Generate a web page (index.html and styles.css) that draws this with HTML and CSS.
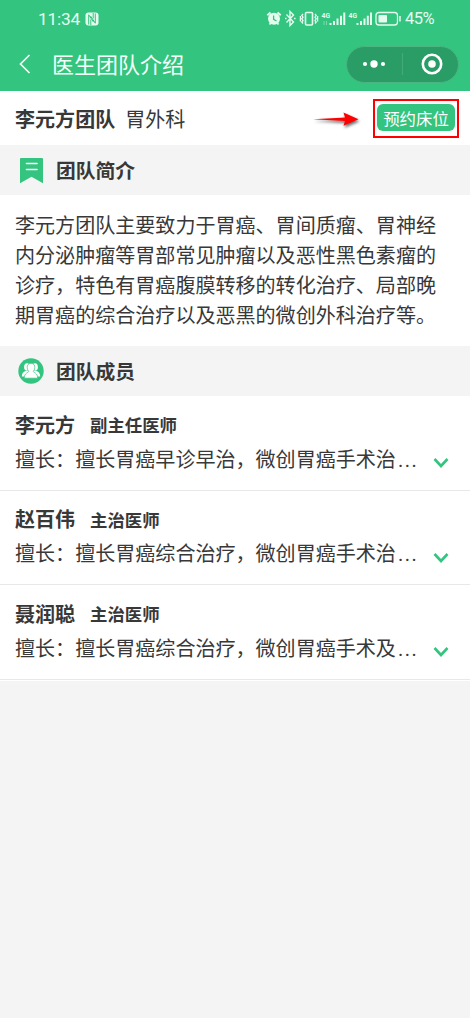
FILE: index.html
```html
<!DOCTYPE html>
<html lang="zh-CN">
<head>
<meta charset="utf-8">
<title>医生团队介绍</title>
<link rel="stylesheet" href="styles.css">
</head>
<body>
<header class="top">
  <div class="status">
    <span class="time">11:34</span>
    <svg class="nfc" width="14" height="14" viewBox="0 0 14 14"><rect x=".5" y=".5" width="13" height="13" rx="3" fill="#e6fbef"/><path d="M3.700 12.500V2.800L8.500 10M5.500 4 10.300 11.200V1.500M5.800 13V7.500M8.200 1v5.500" fill="none" stroke="#33c47f" stroke-width="1"/></svg>
    <svg class="indicators" width="136" height="20" viewBox="0 0 136 20" fill="none" stroke="#e6fbef">
      <circle cx="8" cy="9.800" r="6" fill="#e6fbef" stroke="none"/>
      <path d="M1.300 6.300 4.500 3.500M11.500 3.500l3.200 2.800M3.500 15.500l1.200-1.500M12.500 15.500l-1.200-1.500" stroke-width="1.900"/>
      <path d="M7.600 6.500v3.800l2.900 1.700" stroke="#33c47f" stroke-width="1.300"/>
      <path d="M20.500 5.500l7 7.500-3.500 3.500V2.500L27.500 6l-7 7.500" stroke-width="1.400"/>
      <path d="M19 9.500h1.600M28 9.500h1.600" stroke-width="1.600"/>
      <rect x="39.500" y="3.500" width="7" height="12.500" rx="1" stroke-width="1.600"/>
      <path d="M37 5l-1.200 1.600L37 8.200l-1.200 1.600 1.200 1.600-1.200 1.600 1.200 1.500M34.400 7v5.500M49 5l1.200 1.600L49 8.200l1.200 1.600-1.200 1.600 1.200 1.600-1.200 1.500M51.600 7v5.500" stroke-width="1.300"/>
      <g stroke-width="2"><path d="M64.500 14v2M68 12v4M71.500 9.500V16M75 6.700V16M78.300 3.500V16"/><path d="M91.500 14v2M95 12v4M98.500 9.500V16M101.800 6.700V16M105 3.500V16"/></g>
      <path d="M58 12v4M60.500 12v4" stroke-width="1" opacity=".4"/>
      <g class="net" fill="#e6fbef" stroke="none"><text x="55.500" y="9" textLength="8.500" lengthAdjust="spacingAndGlyphs">4G</text><text x="82.500" y="9" textLength="8.500" lengthAdjust="spacingAndGlyphs">4G</text></g>
      <rect x="110" y="3.500" width="21.500" height="12.500" rx="3" stroke-width="1.300"/>
      <rect x="112.500" y="6" width="8.500" height="7.500" rx="1" fill="#e6fbef" stroke="none"/>
      <path d="M134 7v5.500" stroke-width="1.500"/>
    </svg>
    <span class="percent">45%</span>
  </div>
  <div class="nav">
    <svg class="back" width="12" height="20" viewBox="0 0 12 20" fill="none" stroke="#f4fff9" stroke-width="1.700"><path d="M10.500 1 1.500 10l9 9"/></svg>
    <h1>医生团队介绍</h1>
    <div class="capsule">
      <svg width="24" height="10" viewBox="0 0 24 10" fill="#fff"><circle cx="3" cy="5" r="2.100"/><circle cx="12" cy="5" r="3.700"/><circle cx="21" cy="5" r="2.100"/></svg>
      <i class="divider"></i>
      <svg width="22" height="22" viewBox="0 0 22 22"><circle cx="11" cy="11" r="9.200" fill="none" stroke="#fff" stroke-width="2.600"/><circle cx="11" cy="11" r="3.800" fill="#fff"/></svg>
    </div>
  </div>
</header>
<main>
  <section class="team">
    <strong>李元方团队</strong><span class="dept">胃外科</span>
    <svg class="arrow" width="48" height="16" viewBox="0 0 48 16"><path d="M0 8.200 32 6.500 30.500 1.500 45.500 8.200 30.500 14.800 32 10Z" fill="#f00"/></svg>
    <div class="highlight"><button class="book">预约床位</button></div>
  </section>
  <h2 class="section-title">
    <svg width="25" height="27" viewBox="0 0 25 27"><path d="M1.500 1h21q1 0 1 1v24.300L12 19.700.5 26.300V2Q.5 1 1.500 1Z" fill="#33c47f"/><path d="M7 6.500h10.500M7 12.500h10.500" stroke="#fff" stroke-width="1.600" stroke-linecap="round"/></svg>
    <span>团队简介</span>
  </h2>
  <p class="intro">李元方团队主要致力于胃癌、胃间质瘤、胃神经<br>内分泌肿瘤等胃部常见肿瘤以及恶性黑色素瘤的<br>诊疗，特色有胃癌腹膜转移的转化治疗、局部晚<br>期胃癌的综合治疗以及恶黑的微创外科治疗等。</p>
  <h2 class="section-title">
    <svg class="people" width="26" height="26" viewBox="0 0 26 26"><circle cx="13" cy="13" r="12.700" fill="#33c47f"/><g fill="#fff"><ellipse cx="9" cy="9" rx="2.900" ry="3.800"/><path d="M3.800 18.500q0-4.300 3.800-5.500h4.400v5.500Z"/><ellipse cx="17" cy="9" rx="2.900" ry="3.800"/><path d="M22.200 18.500q0-4.300-3.800-5.500H14v5.500Z"/></g><path d="M13 5.300c-2.700 0-4.100 1.900-3.800 4.500.1 1.600.7 2.700 1.500 3.600-.3 1.400-4.400 1.300-4.400 6.800h13.400c0-5.500-4.100-5.400-4.400-6.800.8-.9 1.400-2 1.500-3.600.3-2.600-1.100-4.500-3.800-4.500Z" fill="#fff" stroke="#33c47f" stroke-width=".7"/></svg>
    <span>团队成员</span>
  </h2>
  <ul class="members">
    <li>
      <div class="who"><strong>李元方</strong><b>副主任医师</b></div>
      <div class="skill"><span>擅长：擅长胃癌早诊早治，微创胃癌手术治<i class="more">...</i></span><svg class="chevron" width="16" height="12" viewBox="0 0 16 12"><path d="m1.500 2 6.500 7 6.500-7"/></svg></div>
    </li>
    <li>
      <div class="who"><strong>赵百伟</strong><b>主治医师</b></div>
      <div class="skill"><span>擅长：擅长胃癌综合治疗，微创胃癌手术治<i class="more">...</i></span><svg class="chevron" width="16" height="12" viewBox="0 0 16 12"><path d="m1.500 2 6.500 7 6.500-7"/></svg></div>
    </li>
    <li>
      <div class="who"><strong>聂润聪</strong><b>主治医师</b></div>
      <div class="skill"><span>擅长：擅长胃癌综合治疗，微创胃癌手术及<i class="more">...</i></span><svg class="chevron" width="16" height="12" viewBox="0 0 16 12"><path d="m1.500 2 6.500 7 6.500-7"/></svg></div>
    </li>
  </ul>
</main>
</body>
</html>
```
FILE: styles.css
```css
* { box-sizing: border-box; }
body {
  margin: 0;
  min-height: 1018px;
  background: #f4f4f4;
  color: #383838;
  font-family: "Noto Sans CJK SC", sans-serif;
  font-size: 20.06px;
}
h1, h2, p, ul { margin: 0; padding: 0; }
svg { display: block; flex: none; }
.top { height: 91px; background: #33c47f; color: #f4fff9; }
.status {
  height: 37px;
  display: flex;
  align-items: center;
  padding: 0 34px 0 38px;
  font-family: Roboto, sans-serif;
  font-size: 17.3px;
  line-height: 36px;
  color: #e6fbef;
}
.time { width: 47px; letter-spacing: -.2px; }
.indicators { margin-left: auto; margin-right: 3px; }
.percent { width: 31px; font-size: 16.500px; letter-spacing: -.5px; padding-top: 1px; }
.net { font: bold 8px Roboto, sans-serif; }
.nav { height: 54px; display: flex; align-items: center; padding: 0 11px 0 19px; }
.nav h1 { margin-left: 21px; font-size: 22px; font-weight: 400; line-height: 50px; padding-bottom: 3px; }
.capsule {
  width: 113px;
  height: 37px;
  margin-left: auto;
  display: flex;
  align-items: center;
  justify-content: space-between;
  padding: 0 15px;
  border: 1px solid #4bb481;
  border-radius: 19px;
  background: #299d65;
}
.divider { width: 1px; height: 22px; margin-right: 2px; background: #43ab77; }
.team { height: 54px; display: flex; align-items: center; padding: 0 11px 0 15px; background: #fff; }
.team strong { font-weight: 700; }
.dept { margin-left: 10px; }
.arrow { margin-left: auto; margin-top: 2px; margin-right: 12px; filter: drop-shadow(1px 2px 1.5px rgba(0, 0, 0, .6)); }
.highlight { width: 86px; height: 39px; margin-top: 1px; padding: 3px 2px; border: 2px solid #f00; }
.book {
  display: block;
  width: 78px;
  height: 27px;
  margin: 0;
  padding: 0;
  border: 0;
  border-radius: 6px;
  background: #33c47f;
  color: #fff;
  font: 16.4px/26px "Noto Sans CJK SC", sans-serif;
}
.section-title {
  height: 50px;
  display: flex;
  align-items: center;
  gap: 11px;
  padding-left: 19px;
  font-size: 19.8px;
  font-weight: 700;
}
.section-title svg { width: 26px; }
.section-title span { padding-bottom: 2px; }
.section-title .people { margin-left: -1px; margin-right: 1px; }
.intro { height: 151px; padding: 15px 15px 0; background: #fff; line-height: 30.1px; white-space: nowrap; }
.members { list-style: none; background: #fff; height: 285px; }
.members li { height: 94.500px; padding: 13px 0 0 15px; border-bottom: 1.500px solid #e8e8e8; }
.who { display: flex; align-items: center; height: 30px; }
.who strong { width: 75px; }
.who b { font-size: 17.400px; font-weight: 700; padding-top: 1px; }
.skill { display: flex; align-items: center; height: 38px; white-space: nowrap; }
.skill span { width: 418px; }
.more { margin-left: 2px; font-family: Roboto, sans-serif; font-style: normal; letter-spacing: 1.500px; }
.chevron { margin-top: 10px; fill: none; stroke: #33c47f; stroke-width: 2.600; }
```
